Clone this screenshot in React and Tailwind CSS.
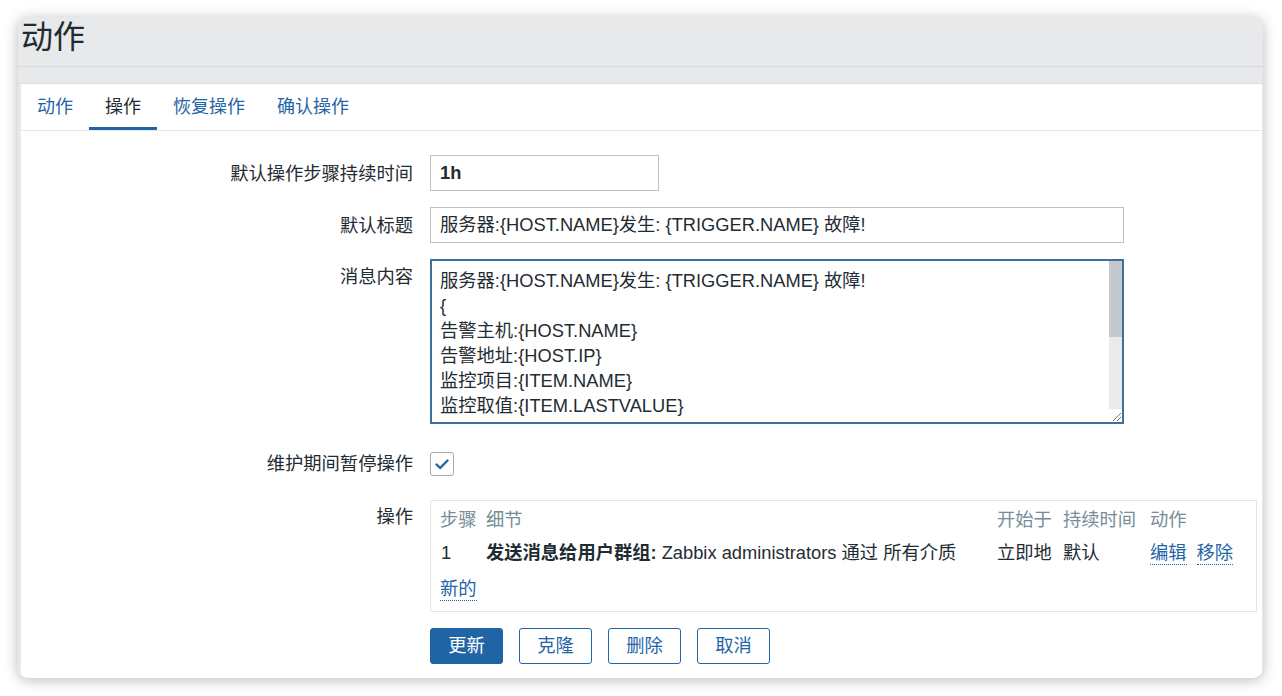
import React from "react";

const Row = ({ label, children, className = "", labelClass = "" }) => (
  <div className={`flex gap-[17px] ${className}`}>
    <div className={`w-[392px] shrink-0 text-right text-[18.3px] leading-[25px] text-[#1f2c33] ${labelClass}`}>{label}</div>
    {children}
  </div>
);

const Link = ({ children }) => (
  <span className="text-[#1f65a6] border-b border-dotted border-[#1f65a6] leading-[22px] inline-block">{children}</span>
);

export default function App() {
  return (
    <div className="min-h-[696px] w-[1282px] bg-white pt-[17px] pl-[18px] font-['Liberation_Sans','Noto_Sans_CJK_SC',sans-serif] text-[#1f2c33]">
      <div className="w-[1245px] h-[661px] rounded-[10px] bg-[#e8e9eb] shadow-[0_2px_14px_rgba(0,0,0,0.28)] overflow-hidden flex flex-col">
        <div className="h-[50px] shrink-0 border-b border-[#d6d8da] pl-[3px] pt-[4px] text-[32px] leading-none text-[#1f2c33]">动作</div>
        <div className="h-[17px] shrink-0 border-b border-[#dcdee0]"></div>
        <div className="flex-1 ml-[3px] mr-[1px] bg-white flex flex-col">
          <div className="h-[47px] shrink-0 border-b border-[#e6e7e8] flex text-[18px]">
            <div className="px-4 flex items-center text-[#1f65a6]">动作</div>
            <div className="px-4 flex items-center pt-[3px] border-b-[3px] border-[#1f65a6] text-[#1f2c33]">操作</div>
            <div className="px-4 flex items-center text-[#1f65a6]">恢复操作</div>
            <div className="px-4 flex items-center text-[#1f65a6]">确认操作</div>
          </div>

          <div className="pt-[24px] flex flex-col">
            <Row label="默认操作步骤持续时间" className="items-center">
              <div className="w-[229px] h-[36px] border border-[#bdc1c4] px-[9px] flex items-center text-[18.3px] font-semibold text-[#1f2c33]">1h</div>
            </Row>
            <Row label="默认标题" className="items-center mt-[16px]">
              <div className="w-[694px] h-[36px] border border-[#bdc1c4] px-[9px] flex items-center text-[18.3px] text-[#1f2c33]">
                服务器:{"{HOST.NAME}"}发生: {"{TRIGGER.NAME}"} 故障!
              </div>
            </Row>
            <Row label="消息内容" className="items-start mt-[16px]" labelClass="mt-[5px]">
              <div className="w-[694px] h-[165px] border-2 border-[#41709a] flex">
                <div className="flex-1 pl-[8px] pt-[7px] text-[18.3px] leading-[25px] overflow-hidden text-[#1f2c33]">
                  <div>服务器:{"{HOST.NAME}"}发生: {"{TRIGGER.NAME}"} 故障!</div>
                  <div>{"{"}</div>
                  <div>告警主机:{"{HOST.NAME}"}</div>
                  <div>告警地址:{"{HOST.IP}"}</div>
                  <div>监控项目:{"{ITEM.NAME}"}</div>
                  <div>监控取值:{"{ITEM.LASTVALUE}"}</div>
                </div>
                <div className="w-[13px] flex flex-col">
                  <div className="h-[76px] bg-[#c3c9cf]"></div>
                  <div className="flex-1 bg-[#e9eaec]"></div>
                  <div className="h-[13px] bg-white flex items-end justify-end">
                    <svg width="13" height="13" viewBox="0 0 13 13">
                      <path d="M4 12 L12 4 M8 12 L12 8" stroke="#777" strokeWidth="1" fill="none" />
                    </svg>
                  </div>
                </div>
              </div>
            </Row>
            <Row label="维护期间暂停操作" className="items-center mt-[27px]">
              <div className="w-[24px] h-[24px] border border-[#a3aab0] rounded-[3px] flex items-center justify-center bg-white">
                <svg width="16" height="16" viewBox="0 0 16 16">
                  <path d="M2.5 8.5 L6.2 12 L13.5 4.5" stroke="#1f65a6" strokeWidth="2.4" fill="none" strokeLinecap="round" strokeLinejoin="round" />
                </svg>
              </div>
            </Row>
            <Row label="操作" className="items-start mt-[24px]" labelClass="mt-[4px]">
              <div className="w-[827px] border border-[#e4e6e8] px-[9px] py-[3px] text-[18.3px]">
                <div className="grid grid-cols-[46px_511px_66px_87px_1fr] h-[32px] items-center text-[#768d99]">
                  <div>步骤</div>
                  <div>细节</div>
                  <div>开始于</div>
                  <div>持续时间</div>
                  <div>动作</div>
                </div>
                <div className="grid grid-cols-[46px_511px_66px_87px_1fr] h-[34px] items-center text-[#1f2c33]">
                  <div className="pl-[1px]">1</div>
                  <div className="whitespace-nowrap"><span className="font-bold">发送消息给用户群组:</span> Zabbix administrators 通过 所有介质</div>
                  <div>立即地</div>
                  <div>默认</div>
                  <div className="flex gap-[10px]"><Link>编辑</Link><Link>移除</Link></div>
                </div>
                <div className="h-[38px] flex items-center">
                  <Link>新的</Link>
                </div>
              </div>
            </Row>
            <div className="mt-[16px] pl-[409px] flex gap-[16px] text-[18.3px]">
              <div className="w-[73px] h-[36px] rounded-[3px] bg-[#1f65a6] border border-[#1f65a6] text-white flex items-center justify-center">更新</div>
              <div className="w-[73px] h-[36px] rounded-[3px] border border-[#1f65a6] text-[#1f65a6] flex items-center justify-center">克隆</div>
              <div className="w-[73px] h-[36px] rounded-[3px] border border-[#1f65a6] text-[#1f65a6] flex items-center justify-center">删除</div>
              <div className="w-[73px] h-[36px] rounded-[3px] border border-[#1f65a6] text-[#1f65a6] flex items-center justify-center">取消</div>
            </div>
          </div>
        </div>
      </div>
    </div>
  );
}
